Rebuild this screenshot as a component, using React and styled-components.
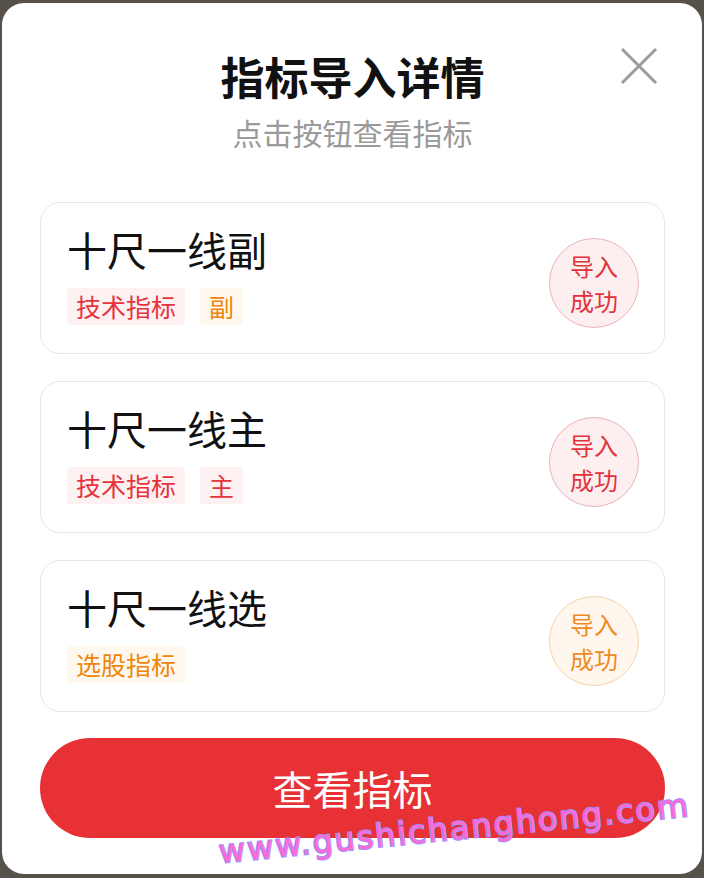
import styled, { createGlobalStyle } from "styled-components";

const GlobalStyle = createGlobalStyle`
  html, body {
    margin: 0;
    padding: 0;
    background: #57514c;
  }
  body {
    font-family: "Noto Sans CJK SC", "Noto Sans", sans-serif;
  }
`;

const Modal = styled.div`
  position: relative;
  box-sizing: border-box;
  margin: 3px 2px 0 2px;
  height: 871px;
  background: #fff;
  border-radius: 22px;
  padding: 47px 37px 0 38px;
  overflow: hidden;
`;

const Header = styled.div`
  display: flex;
  flex-direction: column;
  align-items: center;
`;

const Title = styled.h1`
  margin: 0;
  font-size: 44px;
  line-height: 52px;
  font-weight: 700;
  color: #111;
`;

const Subtitle = styled.p`
  margin: 12px 0 0;
  font-size: 30px;
  line-height: 36px;
  color: #9a9a9a;
`;

const CloseButton = styled.button`
  position: absolute;
  top: 44px;
  right: 44px;
  width: 38px;
  height: 38px;
  padding: 0;
  border: none;
  background: none;
`;

const List = styled.div`
  display: flex;
  flex-direction: column;
  gap: 27px;
  margin-top: 52px;
`;

const Card = styled.div`
  box-sizing: border-box;
  height: 152px;
  border: 1px solid #e6e6e6;
  border-radius: 20px;
  padding: 0 25px 0 26px;
  display: flex;
  align-items: center;
  justify-content: space-between;
`;

const Info = styled.div`
  align-self: flex-start;
  padding-top: 24px;
  display: flex;
  flex-direction: column;
`;

const Name = styled.div`
  font-size: 40px;
  line-height: 44px;
  color: #111;
`;

const Tags = styled.div`
  display: flex;
  gap: 15px;
  margin-top: 17px;
`;

const Tag = styled.span`
  font-size: 25px;
  line-height: 37px;
  padding: 0 9px;
  border-radius: 4px;
  color: ${(p) => (p.$tone === "orange" ? "#ef860c" : "#e6333b")};
  background: ${(p) => (p.$tone === "orange" ? "#fff8ee" : "#fdf1f1")};
`;

const Badge = styled.div`
  box-sizing: border-box;
  width: 90px;
  height: 90px;
  margin-top: 10px;
  border-radius: 50%;
  display: flex;
  flex-direction: column;
  align-items: center;
  justify-content: center;
  font-size: 24px;
  line-height: 35px;
  color: ${(p) => (p.$tone === "orange" ? "#ef8a1e" : "#e2333d")};
  background: ${(p) => (p.$tone === "orange" ? "#fff7ee" : "#fdeff0")};
  border: 1px solid ${(p) => (p.$tone === "orange" ? "#f5d2a8" : "#e9b3b9")};
`;

const ViewButton = styled.button`
  display: block;
  width: 100%;
  height: 100px;
  margin-top: 26px;
  border: none;
  border-radius: 50px;
  background: #e83134;
  color: #fff;
  font-family: "Noto Sans CJK SC", "Noto Sans", sans-serif;
  font-size: 40px;
`;

const Watermark = styled.div`
  position: absolute;
  left: 217px;
  top: 830px;
  font-family: "DejaVu Sans", sans-serif;
  font-size: 32px;
  letter-spacing: 2px;
  color: #ff6ad4;
  -webkit-text-stroke: 2px #9a90ff;
  paint-order: stroke fill;
  transform: rotate(-5.7deg);
  transform-origin: left center;
  white-space: nowrap;
  pointer-events: none;
`;

const items = [
  { name: "十尺一线副", tags: [["技术指标", "red"], ["副", "orange"]], tone: "red" },
  { name: "十尺一线主", tags: [["技术指标", "red"], ["主", "red"]], tone: "red" },
  { name: "十尺一线选", tags: [["选股指标", "orange"]], tone: "orange" },
];

export default function App() {
  return (
    <>
      <GlobalStyle />
      <Modal>
        <Header>
          <Title>指标导入详情</Title>
          <Subtitle>点击按钮查看指标</Subtitle>
        </Header>
        <CloseButton aria-label="关闭">
          <svg width="38" height="38" viewBox="0 0 38 38">
            <path d="M2 2 L36 36 M36 2 L2 36" stroke="#9b9b9b" strokeWidth="3" fill="none" />
          </svg>
        </CloseButton>
        <List>
          {items.map((item) => (
            <Card key={item.name}>
              <Info>
                <Name>{item.name}</Name>
                <Tags>
                  {item.tags.map(([label, tone]) => (
                    <Tag key={label} $tone={tone}>{label}</Tag>
                  ))}
                </Tags>
              </Info>
              <Badge $tone={item.tone}>
                <span>导入</span>
                <span>成功</span>
              </Badge>
            </Card>
          ))}
        </List>
        <ViewButton>查看指标</ViewButton>
        <Watermark>www.gushichanghong.com</Watermark>
      </Modal>
    </>
  );
}
